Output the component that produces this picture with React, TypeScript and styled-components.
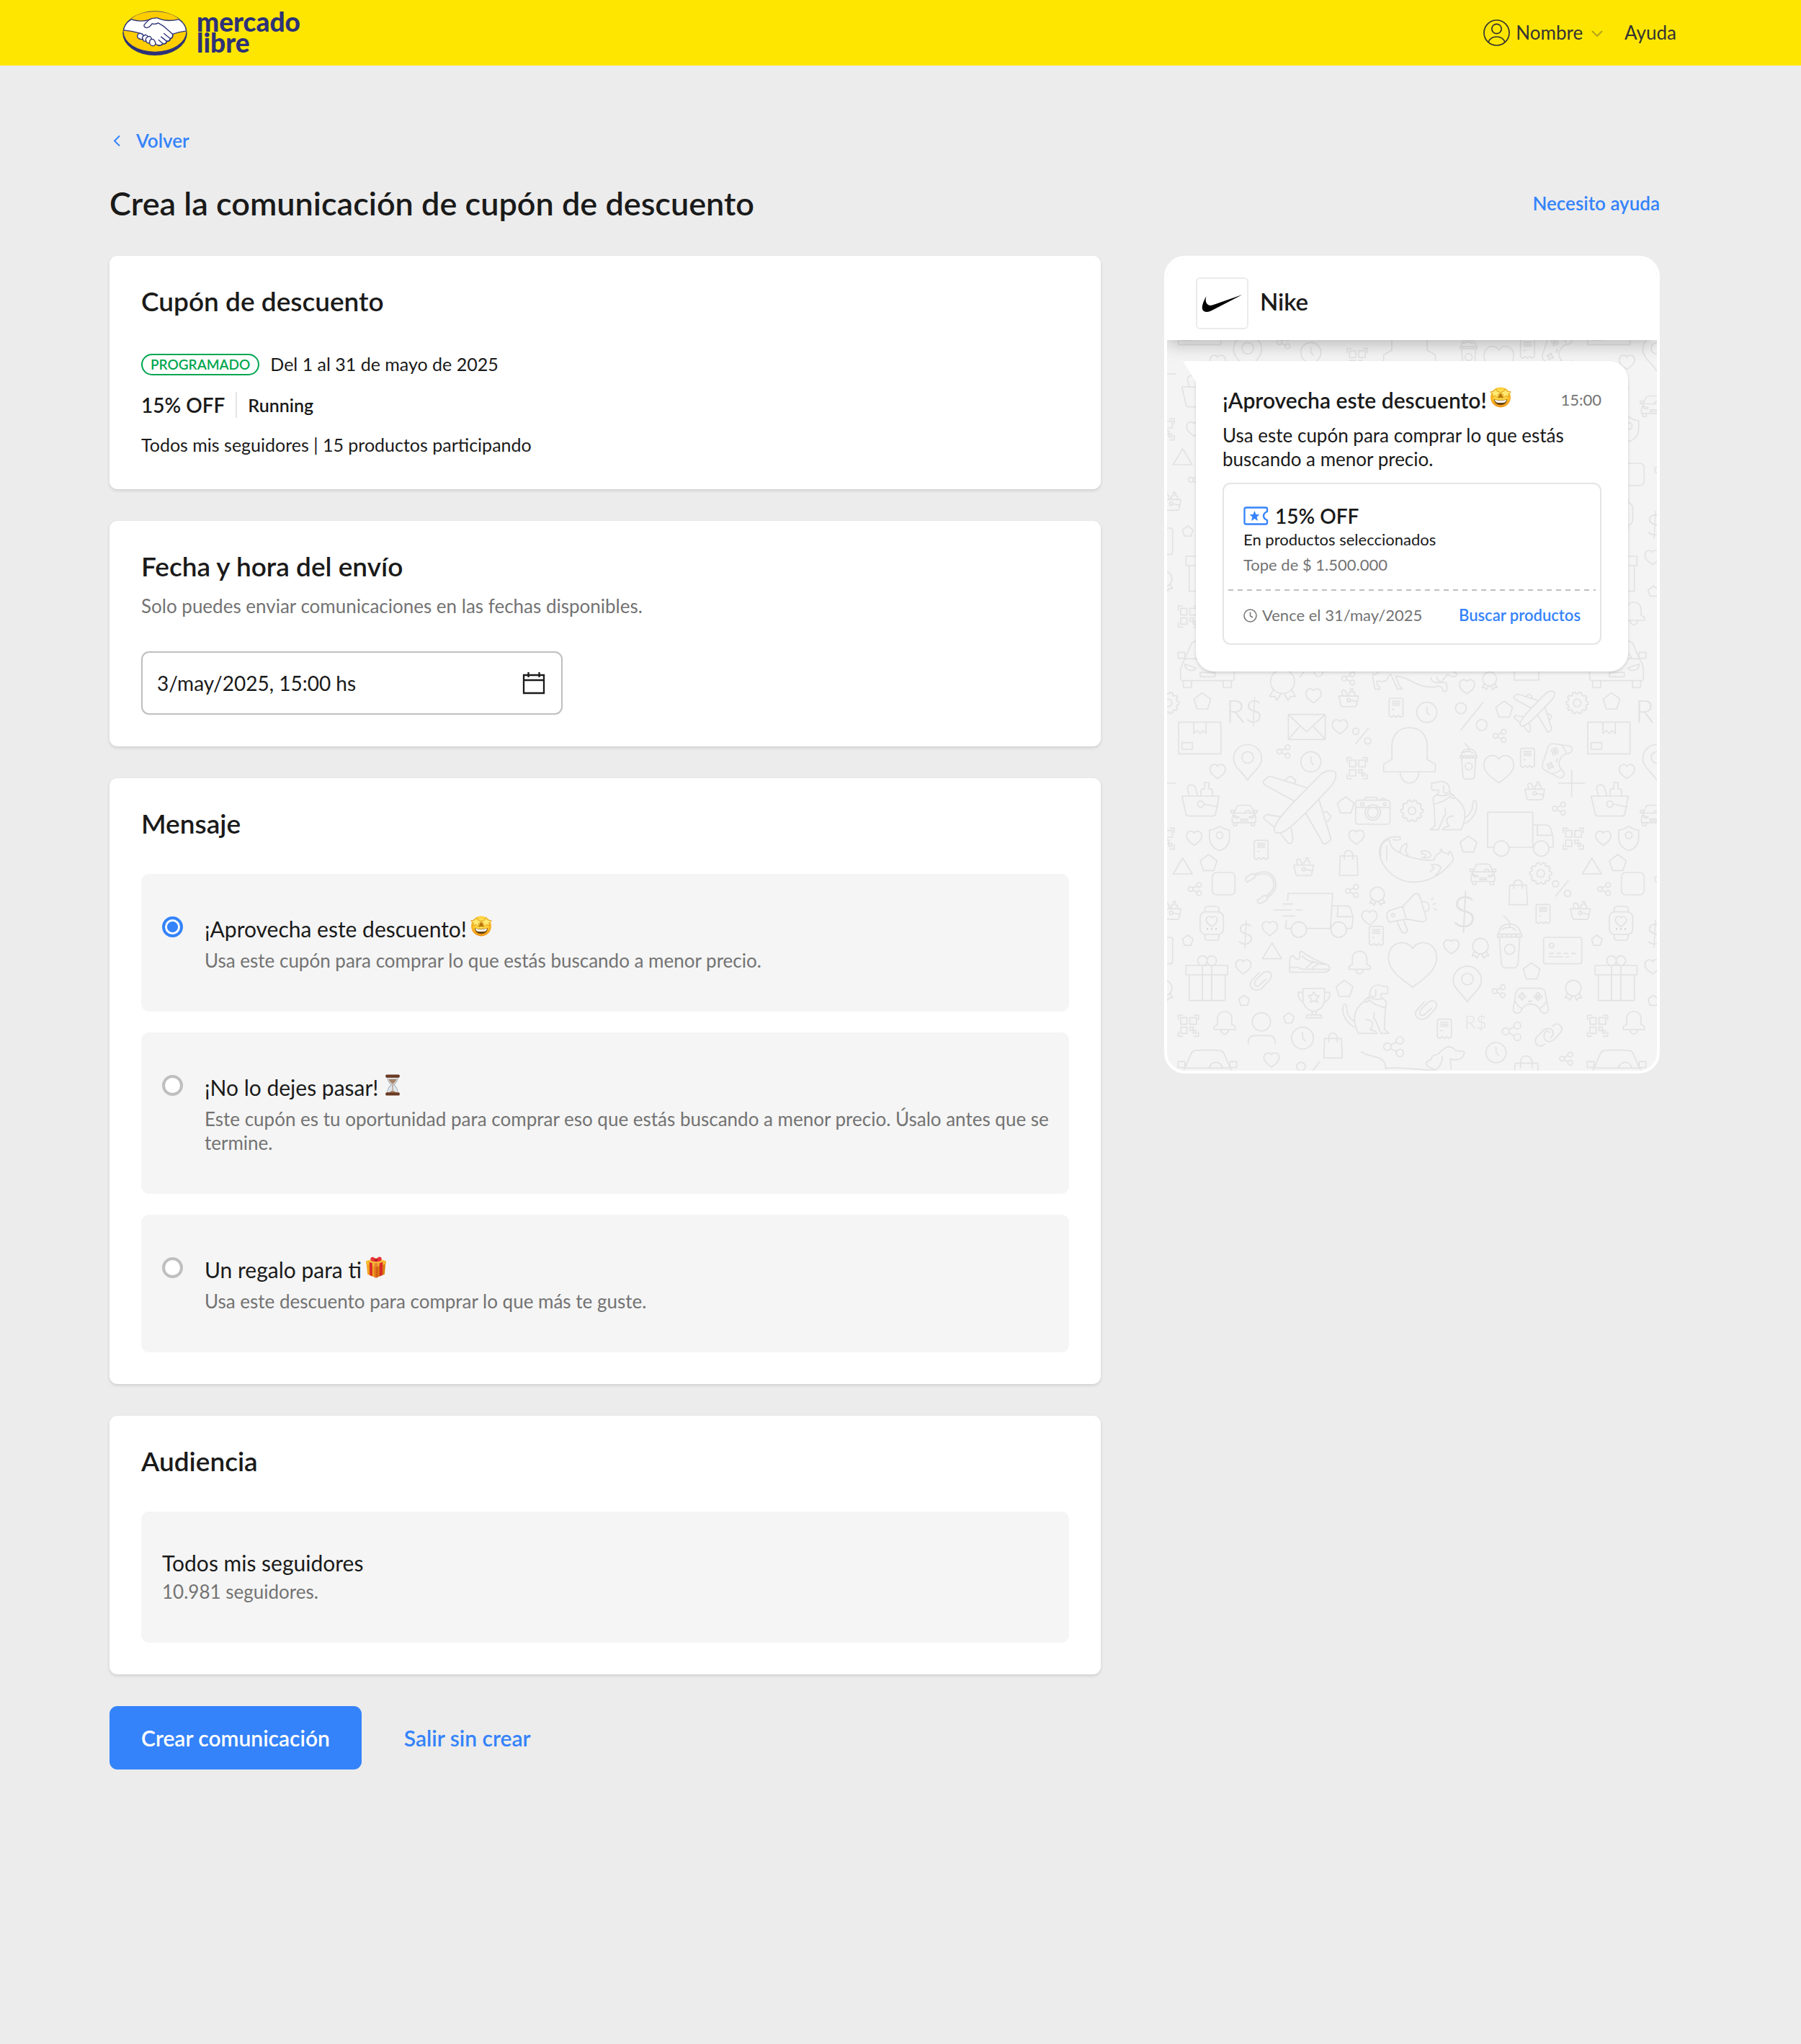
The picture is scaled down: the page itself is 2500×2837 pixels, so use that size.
import React, { useState } from 'react';
import styled, { createGlobalStyle } from 'styled-components';

const font = 'Lato, "Liberation Sans", sans-serif';
const blue = '#3483fa';
const ink = '#1a1a1a';
const muted = '#737373';

const GlobalStyle = createGlobalStyle`
  *, *::before, *::after { box-sizing: border-box; }
  html { min-height: 100%; background: #ececec; }
  body { margin: 0; font-family: ${font}; font-size: 26px; line-height: 33px; color: ${ink}; }
  button, input { font: inherit; color: inherit; }
  h1, h2, h3, p { margin: 0; }
  a { color: inherit; text-decoration: none; }
`;

/* ---------- layout ---------- */

const TopBar = styled.header`
  display: flex;
  align-items: center;
  justify-content: space-between;
  height: 91px;
  padding: 0 173px 0 170px;
  background: #ffe600;
`;

const Brand = styled.a`
  display: flex;
  align-items: center;
  gap: 13px;
  color: #2d3277;
`;

const Wordmark = styled.span`
  width: min-content;
  font-size: 37px;
  font-weight: 900;
  line-height: 29px;
  padding-bottom: 4px;
`;

const Nav = styled.nav`
  display: flex;
  align-items: center;
  gap: 23px;
  color: #333;
`;

const UserButton = styled.button`
  display: flex;
  align-items: center;
  gap: 8px;
  padding: 0;
  border: 0;
  background: none;
  cursor: pointer;
`;

const Page = styled.main`
  padding: 88px 196px 160px 152px;
`;

const BackLink = styled.a`
  display: flex;
  align-items: center;
  gap: 21px;
  width: fit-content;
  padding-left: 5px;
  height: 32px;
  font-weight: 600;
  color: ${blue};
`;

const TitleRow = styled.div`
  display: flex;
  align-items: center;
  justify-content: space-between;
  margin: 44px 0 46px;
`;

const PageTitle = styled.h1`
  font-size: 45px;
  line-height: 54px;
  font-weight: 600;
`;

const TextLink = styled.a<{ $small?: boolean }>`
  font-size: ${(p) => (p.$small ? 22 : 26)}px;
  line-height: 30px;
  font-weight: 600;
  color: ${blue};
`;

const Columns = styled.div`
  display: grid;
  grid-template-columns: minmax(0, 2fr) minmax(0, 1fr);
  gap: 88px;
  align-items: start;
`;

const Stack = styled.form`
  display: flex;
  flex-direction: column;
  gap: 44px;
`;

const Card = styled.section`
  padding: 44px;
  border-radius: 11px;
  background: #fff;
  box-shadow: 0 2px 4px rgba(0, 0, 0, 0.13);
`;

const CardTitle = styled.h2`
  font-size: 37px;
  line-height: 38px;
  font-weight: 600;
`;

const Facts = styled.div`
  display: flex;
  flex-direction: column;
  gap: 21px;
  margin-top: 51px;
  font-size: 25px;
`;

const FactRow = styled.div`
  display: flex;
  align-items: center;
  gap: 15px;
  height: 35px;
`;

const Badge = styled.span`
  display: inline-flex;
  align-items: center;
  height: 30px;
  padding: 0 11px;
  border: 2px solid #00a650;
  border-radius: 15px;
  font-size: 19px;
  line-height: 24px;
  font-weight: 600;
  color: #00a650;
`;

const Discount = styled.strong`
  font-size: 28px;
  line-height: 36px;
  font-weight: 600;
`;

const Category = styled.strong`
  padding-left: 15px;
  border-left: 2px solid #e5e5e5;
  font-weight: 600;
  line-height: 36px;
`;

const Hint = styled.p`
  margin-top: 20px;
  color: ${muted};
`;

const DateField = styled.label`
  display: flex;
  align-items: center;
  justify-content: space-between;
  width: 585px;
  max-width: 100%;
  height: 88px;
  margin-top: 46px;
  padding: 0 22px 0 20px;
  border: 2px solid #bfbfbf;
  border-radius: 11px;
`;

const DateInput = styled.input`
  flex: 1;
  min-width: 0;
  padding: 0;
  border: 0;
  outline: 0;
  background: none;
  font-size: 28px;
`;

const OptionList = styled.div`
  display: flex;
  flex-direction: column;
  gap: 29px;
  margin-top: 51px;
`;

const Option = styled.label`
  display: flex;
  align-items: flex-start;
  gap: 30px;
  padding: 56px 16px 54px 29px;
  border-radius: 11px;
  background: #f5f5f5;
  cursor: pointer;
`;

const Radio = styled.input`
  appearance: none;
  flex: none;
  width: 29px;
  height: 29px;
  margin: 3px 0 0;
  border: 4px solid #bfbfbf;
  border-radius: 50%;
  background: #fff;
  &:checked {
    border-color: ${blue};
    background: radial-gradient(circle, ${blue} 7px, #fff 8px);
  }
`;

const OptionText = styled.span`
  display: flex;
  flex-direction: column;
  gap: 8px;
`;

const OptionTitle = styled.span`
  font-size: 30px;
  line-height: 40px;
`;

const OptionBody = styled.span`
  color: ${muted};
`;

const AudienceBox = styled.div`
  display: flex;
  flex-direction: column;
  gap: 4px;
  margin-top: 51px;
  padding: 51px 29px 54px;
  border-radius: 11px;
  background: #f5f5f5;
`;

const Actions = styled.div`
  display: flex;
  gap: 15px;
`;

const ActionButton = styled.button<{ $primary?: boolean }>`
  height: 88px;
  padding: 0 44px;
  border: 0;
  border-radius: 11px;
  background: ${(p) => (p.$primary ? blue : 'transparent')};
  color: ${(p) => (p.$primary ? '#fff' : blue)};
  font-size: 30px;
  font-weight: 600;
  cursor: pointer;
`;

/* ---------- message preview ---------- */

const Preview = styled.aside`
  border: 4px solid #fff;
  border-radius: 29px;
  background: #f4f4f4;
  overflow: hidden;
`;

const PreviewHead = styled.div`
  position: relative;
  z-index: 1;
  display: flex;
  align-items: center;
  gap: 16px;
  padding: 26px 40px 15px;
  background: #fff;
  box-shadow: 0 4px 24px rgba(0, 0, 0, 0.28);
`;

const SellerLogo = styled.div`
  display: grid;
  place-items: center;
  width: 73px;
  height: 72px;
  border: 2px solid #ebebeb;
  border-radius: 6px;
`;

const SellerName = styled.h2`
  padding-bottom: 6px;
  font-size: 33px;
  line-height: 38px;
  font-weight: 600;
`;

const Chat = styled.div`
  position: relative;
  min-height: 1014px;
  padding: 29px 40px;
`;

const Wallpaper = styled.svg`
  position: absolute;
  inset: 0;
  width: 100%;
  height: 100%;
`;

const Bubble = styled.div`
  position: relative;
  padding: 36px 37px 37px;
  border-radius: 0 26px 26px 26px;
  background: #fff;
  box-shadow: 0 2px 4px rgba(0, 0, 0, 0.15);
  &::before {
    content: '';
    position: absolute;
    top: 0;
    left: -18px;
    width: 19px;
    height: 31px;
    background: #fff;
    clip-path: polygon(0 0, 100% 0, 100% 100%);
  }
`;

const BubbleHead = styled.div`
  display: flex;
  justify-content: space-between;
  align-items: center;
`;

const BubbleTitle = styled.h3`
  font-size: 30px;
  line-height: 36px;
  font-weight: 600;
`;

const Small = styled.span<{ $muted?: boolean }>`
  font-size: 22px;
  line-height: 30px;
  color: ${(p) => (p.$muted ? muted : ink)};
`;

const BubbleBody = styled.p`
  margin: 15px 0 16px;
`;

const Coupon = styled.div`
  border: 2px solid #e5e5e5;
  border-radius: 11px;
`;

const CouponMain = styled.div`
  display: flex;
  flex-direction: column;
  gap: 5px;
  padding: 26px 27px 19px;
`;

const CouponTitle = styled.div`
  display: flex;
  align-items: center;
  gap: 9px;
  margin-bottom: -5px;
`;

const Perforation = styled.div`
  height: 2px;
  margin: 0 6px;
  background: repeating-linear-gradient(to right, #bfbfbf 0 7px, transparent 7px 13px);
`;

const CouponFoot = styled.div`
  display: flex;
  align-items: center;
  justify-content: space-between;
  padding: 19px 27px 24px;
`;

const Expiry = styled.span`
  display: flex;
  align-items: center;
  gap: 7px;
`;

const EmojiArt = styled.svg`
  width: 30px;
  height: 30px;
  margin-left: -3px;
  vertical-align: 0;
`;

/* ---------- icons ---------- */

const Handshake = () => (
  <svg width="90" height="62" viewBox="91 44 270 187" aria-hidden="true">
    <ellipse cx="226" cy="138" rx="135" ry="93" fill="#2d3277" />
    <ellipse cx="226" cy="131" rx="131" ry="84" fill="#ffcd00" />
    <g stroke="#2d3277" strokeWidth="4" strokeLinejoin="round" strokeLinecap="round">
      <path
        fill="#fff"
        d="M127 80 Q165 92 200 82 Q215 73 236 74 Q274 92 326 80 Q356 100 357 129 Q330 131 300 142 Q304 156 292 160 Q290 172 276 171 Q274 184 260 182 Q254 192 240 188 Q232 188 229 182 Q222 196 210 188 Q203 184 204 178 Q192 182 189 170 Q176 174 176 163 Q160 166 153 154 Q150 142 164 138 Q128 128 95 125 Q98 98 127 80Z"
      />
      <path fill="none" d="M165 139 Q175 138 178 149 Q190 140 197 152 Q210 148 212 162 Q226 162 229 182" />
      <path fill="none" d="M176 163 Q170 156 178 149 M189 170 Q184 160 197 152 M204 178 Q202 168 212 162" />
      <path
        fill="#fff"
        d="M212 77 Q200 80 181 103 Q178 113 192 115 Q206 112 214 98 Q228 102 240 95 Q262 106 280 124 Q292 134 300 142"
      />
      <path fill="none" d="M300 142 Q303 158 290 160 L264 139 M290 160 Q288 174 275 171 L252 153 M275 171 Q272 186 259 181 L242 166 M259 181 Q252 192 238 188" />
    </g>
  </svg>
);

const UserIcon = () => (
  <svg width="37" height="37" viewBox="0 0 37 37" fill="none" stroke="#333" strokeWidth="1.7" aria-hidden="true">
    <circle cx="18.500" cy="18.500" r="17.500" />
    <circle cx="18.500" cy="13" r="6.700" />
    <path d="M7 31.500 Q10 24 18.500 24 Q27 24 30 31.500" />
  </svg>
);

const ChevronDown = () => (
  <svg width="27" height="16" viewBox="0 0 27 16" fill="none" stroke="#b8a717" strokeWidth="2.200" aria-hidden="true">
    <path d="M5 5 L12 12 L19 5" />
  </svg>
);

const ChevronLeft = () => (
  <svg width="11" height="17" viewBox="0 0 11 17" fill="none" stroke={blue} strokeWidth="2" aria-hidden="true">
    <path d="M9 1.500 L2 8.500 L9 15.500" />
  </svg>
);

const CalendarIcon = () => (
  <svg width="32" height="32" viewBox="0 0 32 32" fill="none" stroke={ink} strokeWidth="2.300" aria-hidden="true">
    <path d="M2 5 H30 V30 H2Z M2 12 H30 M8.500 1 V8 M23.500 1 V8" />
  </svg>
);

const CouponIcon = () => (
  <svg width="35" height="26" viewBox="0 0 35 26" aria-hidden="true">
    <path
      d="M3.500 1.500 H31 Q33 1.500 33 3.500 V7 Q28 9 28 13 T33 19 V22.500 Q33 24.500 31 24.500 H3.500 Q1.500 24.500 1.500 22.500 V3.500 Q1.500 1.500 3.500 1.500Z"
      fill="none"
      stroke={blue}
      strokeWidth="2.300"
    />
    <path d="M15.500 6 L17.500 11 L22.500 11.300 L18.600 14.600 L20 20 L15.500 17 L11 20 L12.400 14.600 L8.500 11.300 L13.500 11Z" fill={blue} />
  </svg>
);

const ClockIcon = () => (
  <svg width="19" height="19" viewBox="0 0 19 19" fill="none" stroke={muted} strokeWidth="1.500" aria-hidden="true">
    <circle cx="9.500" cy="9.500" r="8.500" />
    <path d="M9.500 4.500 V9.800 L13 12" />
  </svg>
);

const Swoosh = () => (
  <svg width="57" height="25" viewBox="0 0 57 25" aria-hidden="true">
    <path d="M56.500 0 L14 22 Q6 26 2 22 Q-2 17 6.500 2 Q4 11 9 14 Q12 16 18 13.500Z" fill="#000" />
  </svg>
);

const StarStruck = () => (
  <EmojiArt viewBox="0 1 56 56" role="img" aria-label="Cara con estrellas">
    <defs>
      <radialGradient id="face" cx="0.5" cy="0.35" r="0.65">
        <stop offset="0" stopColor="#fff36b" />
        <stop offset="0.65" stopColor="#fdc52b" />
        <stop offset="1" stopColor="#ee8f12" />
      </radialGradient>
    </defs>
    <circle cx="28" cy="28" r="26" fill="url(#face)" />
    <path d="M11 33 Q28 38 45 33 Q43 48 28 48 Q13 48 11 33Z" fill="#6b4312" />
    <path d="M13 34 Q28 39 43 34 Q42 40 39 41 Q28 43 17 41 Q14 40 13 34Z" fill="#fff" />
    <path d="M22 31 Q24 18 28 18 Q32 18 34 31 Q28 27 22 31Z" fill="#b8740c" />
    <g fill="#ffe96e" stroke="#d98f14" strokeWidth="1.500" strokeLinejoin="round">
      <path d="M16 5 L19 12 L28 15 L22 20 L21 29 L14 24 L6 27 L8 20 L1 14 L11 12Z" />
      <path d="M40 5 L45 12 L55 14 L48 20 L50 27 L42 24 L35 29 L34 20 L28 15 L37 12Z" />
    </g>
  </EmojiArt>
);

const Hourglass = () => (
  <EmojiArt viewBox="0 0 58 58" role="img" aria-label="Reloj de arena">
    <path d="M15 8 H43 Q43 20 32 28 Q43 36 43 50 H15 Q15 36 26 28 Q15 20 15 8Z" fill="#dfe6ec" stroke="#a9b1b8" strokeWidth="2" />
    <path d="M18 13 H40 Q38 20 29 26 Q20 20 18 13Z" fill="#a98468" />
    <path d="M19 50 Q29 38 39 50Z" fill="#a98468" />
    <path d="M29 26 V44" stroke="#a98468" strokeWidth="2" />
    <rect x="10" y="1" width="38" height="8" rx="3" fill="#6b3a22" />
    <rect x="10" y="49" width="38" height="8" rx="3" fill="#6b3a22" />
  </EmojiArt>
);

const GiftEmoji = () => (
  <EmojiArt viewBox="0 0 58 58" role="img" aria-label="Regalo">
    <path d="M3 13 L29 20 V57 L6 48Z" fill="#f2a31f" />
    <path d="M55 13 L29 20 V57 L52 48Z" fill="#d9820f" />
    <path d="M2 12 L29 4 L56 12 V20 L29 28 L2 20Z" fill="#f8bb35" />
    <path d="M11 15 L19 18 V53 L12 50Z M47 15 L38 18 V53 L46 50Z" fill="#d92b2b" />
    <path d="M24 18 H34 V56 L29 58 L24 56Z" fill="#c81f27" opacity="0.35" />
    <path d="M29 13 Q16 16 14 7 Q15 0 22 2 Q28 4 29 9 Q31 3 37 1 Q44 0 44 7 Q42 16 29 13Z" fill="#e8313b" />
    <circle cx="29" cy="10" r="4" fill="#b81c24" />
  </EmojiArt>
);

/* ---------- wallpaper motifs ---------- */

const gearPath = (r: number, teeth: number) => {
  const points: string[] = [];
  for (let i = 0; i < teeth; i += 1) {
    [-0.3, -0.2, 0.2, 0.3].forEach((offset, k) => {
      const angle = ((i + offset) / teeth) * Math.PI * 2;
      const radius = k === 0 || k === 3 ? r * 0.84 : r;
      points.push(`${(Math.cos(angle) * radius).toFixed(1)} ${(Math.sin(angle) * radius).toFixed(1)}`);
    });
  }
  return `M${points.join('L')}Z`;
};

const circle = (cx: number, cy: number, r: number) =>
  `M${cx - r} ${cy}a${r} ${r} 0 1 0 ${r * 2} 0a${r} ${r} 0 1 0 ${-r * 2} 0`;

const shapes = {
  heart: 'M32 59C14 46 0 36 0 20C0 8 8 0 18 0C25 0 30 4 32 8C34 4 39 0 46 0C56 0 64 8 64 20C64 36 50 46 32 59Z',
  pentagon: 'M35 0L70 26L57 67H13L0 26Z',
  triangle: 'M40 0L80 66H0Z',
  share: `${circle(10, 27, 10)}${circle(44, 10, 10)}${circle(44, 44, 10)}M19 22L35 14M19 32L35 40`,
  clock: `${circle(43, 43, 42)}M43 20V43L55 56`,
  gear: `${gearPath(46, 10)}${circle(0, 0, 16)}`,
  percent: `${circle(13, 15, 13)}${circle(63, 55, 13)}M12 68L67 0`,
  basket: `M0 57H155L140 132Q138 140 128 140H29Q19 140 17 132ZM79 57V36Q79 26 95 26V0H112V26Q127 26 127 36V57M31 57L23 27Q22 10 39 10Q52 10 56 22L66 57${circle(78, 90, 13)}M91 90L152 102`,
  receipt: 'M0 8Q0 0 8 0H50Q58 0 58 8V74L48 80L39 72L29 80L20 72L10 80L0 74ZM12 13H46M12 21H46M12 29H46M12 47H22',
  qr: 'M0 20V0H20M64 0H84V20M84 68V88H64M20 88H0V68M10 10H36V38H10ZM48 10H76V38H48ZM10 50H36V76H10ZM48 50H62V64H48ZM62 64H74V76H62Z',
  medal: `${circle(54, 50, 50)}M16 84L0 112H21L31 128L47 101M92 84L108 112H87L77 128L61 101`,
  bell: 'M0 75V62L14 54V32C14 12 26 0 44 0S74 12 74 32V54L88 62V75ZM28 75A16 19 0 0 0 60 75',
  pin: `M58 148C45 120 0 95 0 58A58 58 0 0 1 117 58C117 95 72 120 58 148Z${circle(59, 53, 24)}`,
  bag: 'M3 22H73L77 103H0ZM20 38V20Q20 0 37 0T56 20V38',
  plane:
    'M48 250C40 230 70 190 132 125L240 15C260 -2 285 -5 300 5C310 20 300 40 285 62L180 172C120 230 85 265 55 258Q48 256 48 250ZM132 127L6 58Q-5 48 5 38L20 25Q25 22 35 24L188 72M232 118L282 280Q284 286 278 290L262 303Q254 307 248 298L176 174M72 191L20 182Q5 184 2 196Q8 206 48 234M114 231Q128 275 122 294Q112 310 102 298L70 258M92 39L106 26Q115 20 120 25L137 41L128 54M251 174L264 169L282 188Q284 194 278 199L266 213',
  car: 'M12 116Q18 91 28 74L56 11Q61 2 74 1Q123 -3 172 1Q184 2 190 11L216 73Q230 91 234 116V153Q234 165 222 165H22Q10 165 10 153V116M28 74H216M130 73A28 28 0 0 1 185 73M0 47H28V72H0ZM216 47H244V72H216ZM28 96L76 113Q66 123 56 123Q28 121 28 96ZM216 96L168 113Q178 123 188 123Q216 121 216 96ZM92 131H154V149H92ZM22 165V190Q22 194 26 194H52Q56 194 56 190V165M188 165V190Q188 194 192 194H218Q222 194 222 190V165',
  cup: `M5 79Q8 36 51 36Q92 38 97 79M0 79H101V91H0ZM14 85H22M34 85H42M54 85H62M74 85H82M8 91L16 200Q18 219 36 219H66Q84 219 86 200L93 91${circle(51, 142, 21)}M25 2L50 27V50M17 62Q25 50 45 52Q60 44 70 60L80 62`,
  gamepad: `M34 0H112Q128 0 134 18L146 82Q150 100 132 104Q120 106 112 90Q100 66 73 66Q46 66 36 90Q28 106 14 104Q-2 100 1 82L12 18Q18 0 34 0ZM8 52Q14 70 36 84M139 52Q134 70 112 84M34 20H42V30H52V38H42V48H34V38H24V30H34Z${circle(104, 24, 6)}${circle(104, 44, 6)}${circle(94, 34, 6)}${circle(114, 34, 6)}M62 58L67 52L72 57L79 51`,
  dog: 'M12 38Q4 36 6 23V8H19L42 2Q69 0 78 23L84 53L99 63M56 18V46Q66 60 78 43M12 38H34Q37 48 32 53L12 70Q12 88 16 103L20 186L0 203H34L59 143M24 56Q54 68 86 53Q104 60 100 72Q90 76 84 63Q59 88 14 96M99 66Q144 98 144 138Q146 168 128 203H50Q59 190 79 188Q50 148 99 145M64 111Q59 128 66 138L56 150M144 178Q194 148 193 98Q192 78 180 83Q176 98 174 118Q164 143 144 153',
  clip: 'M38 2L8 34Q-9 54 8 71Q28 84 48 69L81 34Q95 14 81 2Q63 -6 48 9L23 34Q11 52 23 59Q33 64 43 52L68 29',
};

type ShapeName = keyof typeof shapes;
type Placed = [ShapeName, number, number, number?];

const topLeft: Placed[] = [
  ['car', 106, -31], ['medal', 487, 88], ['heart', 638, 168], ['share', 788, 98], ['basket', 775, 168, 0.53],
  ['receipt', 985, 207], ['pentagon', 172, 185], ['heart', 748, 297], ['percent', 833, 330], ['bell', 962, 330, 2.45],
  ['share', 518, 402], ['clock', 616, 429], ['pin', 337, 401], ['heart', 239, 483], ['qr', 810, 455],
  ['plane', 460, 510], ['basket', 122, 558], ['car', 327, 653, 0.44], ['heart', 141, 761], ['receipt', 423, 799],
  ['pentagon', 769, 618], ['heart', 817, 757], ['pentagon', 198, 858],
];

const topRight: Placed[] = [
  ['medal', 322, 98, 0.58], ['heart', 227, 130], ['bag', 455, -7, 1.35], ['clock', 49, 223], ['percent', 211, 223, 1.74],
  ['pentagon', 379, 219], ['plane', 454, 178, 0.56], ['gear', 718, 227], ['share', 368, 337], ['cup', 231, 393, 0.69],
  ['heart', 330, 446, 1.93], ['receipt', 482, 416], ['basket', 500, 556, 0.53], ['share', 615, 640], ['gear', 30, 676],
  ['dog', 106, 552], ['pentagon', 230, 781], ['qr', 660, 748],
];

const bottomLeft: Placed[] = [
  ['triangle', 85, 3], ['basket', 588, 2, 0.53], ['bag', 778, -28], ['share', 149, 105], ['share', 803, 113],
  ['medal', 904, 124, 0.59], ['heart', 871, 222], ['heart', 456, 267], ['heart', 223, 246, 0.72], ['receipt', 902, 287],
  ['triangle', 457, 356], ['bell', 818, 391], ['heart', 982, 355, 3.14], ['heart', 346, 426], ['pentagon', 124, 324, 0.63],
  ['clip', 407, 476], ['pentagon', 359, 574, 0.63], ['qr', 107, 657], ['bell', 256, 642], ['pentagon', 764, 512],
  ['pentagon', 545, 647, 0.63], ['clock', 578, 706, 1.08], ['bag', 713, 732], ['share', 962, 747, 1.54], ['heart', 463, 814],
];

const bottomRight: Placed[] = [
  ['car', 272, 28, 0.44], ['gear', 566, 67], ['bag', 434, 94], ['percent', 615, 95], ['receipt', 547, 196],
  ['basket', 690, 184, 0.53], ['heart', 162, 343], ['medal', 280, 337, 0.65], ['cup', 386, 241], ['pentagon', 493, 439],
  ['pin', 202, 454], ['share', 364, 530], ['gamepad', 451, 545], ['medal', 667, 512, 0.65], ['clip', 45, 598],
  ['receipt', 136, 674], ['share', 406, 686, 1.42], ['clock', 337, 770], ['share', 645, 811],
];

const Motifs = ({ items }: { items: Placed[] }) => (
  <>
    {items.map(([name, x, y, scale = 1]) => (
      <path key={`${name}${x}-${y}`} d={shapes[name]} transform={`translate(${x} ${y}) scale(${scale})`} strokeWidth={5 / scale} />
    ))}
  </>
);

const TILE = 568;

const MotifTile = () => (
  <g fill="none" stroke="#e2e2e2" strokeWidth="5" strokeLinejoin="round" fontFamily="Lato, sans-serif" fontWeight="300">
    <g transform="translate(-20 -20) scale(0.3333)">
      <Motifs items={topLeft} />
      <path d={`${circle(618, 37, 18)}${circle(691, 99, 18)}M697 16L612 120`} />
      <text x="306" y="308" fontSize="128" fill="#e2e2e2" stroke="none">R$</text>
      <path d="M565 275H719V379H565ZM565 275L641 347L719 275M565 379L612 325M719 379L670 325" />
      <path d="M108 307H284V439H108ZM171 307V354L185 342L198 354L210 342L223 354V307M122 392H166V420H122Z" />
      <path d={`M279 740Q300 755 320 756V790Q318 830 279 842Q240 830 237 790V756Q258 755 279 740Z${circle(279, 778, 14)}`} />
      <rect x="845" y="632" width="144" height="100" rx="12" />
      <path d={`M845 662H989${circle(917, 683, 32)}${circle(917, 683, 22)}${circle(967, 648, 6)}M882 632L888 620H932L938 632M950 632Q952 622 960 624T968 632M868 643H878Q883 649 878 655H868Q863 649 868 643Z`} />
      <path d="M868 -26C890 -8 915 -8 940 0C965 10 972 30 970 46C1000 38 1040 44 1080 46L1190 55M1175 50C1160 45 1140 38 1138 22Q1150 10 1160 8Q1162 -10 1178 -12Q1190 -12 1196 -22Q1220 -46 1235 -46Q1255 -40 1262 -30L1292 -26Q1300 -26 1297 -15Q1290 8 1265 8Q1250 10 1240 5L1243 50M1206 -8Q1208 15 1198 30Q1185 50 1175 50M937 96Q940 110 920 108Q914 115 918 130L927 170H946Q948 158 936 154L934 136Q965 140 975 132Q985 108 992 108L1020 170H1038Q1038 162 1028 156L1012 115Q1040 116 1080 137C1110 155 1140 164 1175 160L1192 156Q1206 158 1210 178Q1225 182 1227 168L1224 150Q1226 140 1215 142L1180 142Q1160 140 1158 120M1182 118Q1190 140 1202 140L1228 108L1240 115Q1258 122 1265 112Q1268 100 1250 96" />
      <path d="M1030 785Q960 778 945 835C935 880 990 973 1090 973C1160 972 1215 930 1252 882Q1250 850 1235 845L1232 860Q1218 848 1210 850L1202 835L1196 852Q1176 858 1172 880C1150 888 1090 876 1050 862L1025 848Q985 830 988 796M1030 785Q1036 798 1020 798L1000 796M950 868Q945 800 985 796M975 885V820M1030 848Q1030 825 1058 810Q1062 830 1052 840L1066 868M1118 870Q1155 878 1160 860Q1145 836 1120 844Q1112 856 1135 858Q1142 865 1128 872M1160 900Q1190 895 1200 912Q1195 935 1175 946M1154 932L1172 916L1160 900" />
    </g>
    <g transform="translate(330 -20) scale(0.3333)">
      <Motifs items={topRight} />
      <path d="M638 561H751M695 505V618" />
      <path d={shapes.gamepad} transform="translate(632 462) rotate(-72) scale(0.95) translate(-73 -52)" />
      <path d={`M370 828H345V682H533V828H434M533 735H585Q605 735 610 755L618 790V828H600M533 828H537M552 735V778H612${circle(402, 833, 32)}${circle(568, 833, 32)}`} />
    </g>
    <g transform="translate(-20 270) scale(0.3333)">
      <Motifs items={bottomLeft} />
      <rect x="248" y="63" width="95" height="93" rx="18" />
      <rect x="198" y="227" width="97" height="94" rx="22" />
      <path d="M218 227V215Q218 204 230 204H264Q276 204 276 215V227M218 321V333Q218 345 230 345H264Q276 345 276 333V321" />
      <path d="M226 298H230M244 298H248M262 298H266" stroke="#b5b5b5" />
      <path d="M425 68Q500 40 514 110Q512 150 478 165M425 76Q492 50 506 110Q504 145 470 161M388 84L415 67L428 75L425 85L395 103Q385 100 388 84ZM436 180L465 158L480 165L475 178L450 192Q436 192 436 180Z" />
      <text x="350" y="364" fontSize="124" fill="#e2e2e2" stroke="none">$</text>
      <path d={`M562 182L564 150H750L740 296H642M576 296H554L557 262M748 202H805Q825 202 828 225L835 250L829 296H806M772 202L769 247H835${circle(609, 301, 32)}${circle(775, 301, 32)}M542 194H585M503 219H580M595 219H625M542 244H593`} />
      <path d={`M1042 204L1085 158Q1097 145 1112 158L1140 255Q1138 270 1120 268L1056 257L985 270Q965 240 985 222ZM1042 204L1056 257${circle(1002, 241, 7)}M1018 268L1037 310Q1050 322 1062 305L1045 262M1122 185Q1150 180 1152 210Q1150 225 1135 225M1160 178L1168 168M1165 195L1181 192M1170 213L1184 220`} />
      <path d={`M139 450H313V489H139ZM152 489V596H302V489M207 450V596M246 450V596${circle(207, 430, 20)}${circle(246, 430, 20)}`} />
      <path d="M569 470L572 418Q575 408 588 410Q592 424 605 424Q618 422 612 402Q612 390 622 392L640 405Q690 435 730 448Q742 460 735 470Q728 478 715 478H575Q568 478 569 470ZM569 458H605Q615 466 630 466H735M622 410Q650 440 690 438M638 462L672 432M662 464L690 442L715 446" />
      <path d={`${circle(453, 685, 38)}M398 778Q396 742 425 742H484Q512 742 511 778`} />
      <path d="M626 546H716V590Q715 630 671 642Q627 630 626 590ZM626 562H605Q605 595 628 604M716 562H739Q738 595 714 604M664 643V656M680 643V656M640 668V662Q640 656 648 656H696Q704 656 704 662V668ZM671 560L678 574L694 576L683 588L686 604L671 596L657 604L660 588L648 576L664 574Z" />
      <path d={shapes.dog} transform="translate(985 530) scale(-1 1)" />
    </g>
    <g transform="translate(330 270) scale(0.3333)">
      <Motifs items={bottomRight} />
      <text x="195" y="292" fontSize="182" fill="#e2e2e2" stroke="none">$</text>
      <text x="249" y="714" fontSize="78" fill="#e2e2e2" stroke="none">R$</text>
      <rect x="578" y="333" width="159" height="110" rx="8" />
      <path d="M607 358H616Q625 367 616 376H607Q598 367 607 358ZM600 400H620M631 400H651M662 400H682M693 400H713M600 414H661M670 414H684" />
      <path d="M613 704Q630 688 645 697Q662 712 648 730L620 760Q600 775 585 760Q572 740 590 722L605 730M585 776Q568 792 552 782Q538 768 548 750L580 718Q600 705 615 720Q625 740 605 752" />
    </g>
  </g>
);

const offsets = [-TILE, 0, TILE];

const ChatWallpaper = () => (
  <Wallpaper aria-hidden="true">
    <defs>
      <g id="motif-tile"><MotifTile /></g>
      <pattern id="motifs" width={TILE} height={TILE} y={-120} patternUnits="userSpaceOnUse">
        {offsets.map((x) => offsets.map((y) => <use key={`${x},${y}`} href="#motif-tile" x={x} y={y} />))}
      </pattern>
    </defs>
    <rect width="100%" height="100%" fill="url(#motifs)" />
  </Wallpaper>
);

/* ---------- page ---------- */

const messages = [
  {
    title: '¡Aprovecha este descuento!',
    body: 'Usa este cupón para comprar lo que estás buscando a menor precio.',
    Emoji: StarStruck,
  },
  {
    title: '¡No lo dejes pasar!',
    body: 'Este cupón es tu oportunidad para comprar eso que estás buscando a menor precio. Úsalo antes que se termine.',
    Emoji: Hourglass,
  },
  { title: 'Un regalo para ti', body: 'Usa este descuento para comprar lo que más te guste.', Emoji: GiftEmoji },
];

export default function App() {
  const [selected, setSelected] = useState(0);
  const [date, setDate] = useState('3/may/2025, 15:00 hs');
  const current = messages[selected];

  return (
    <>
      <GlobalStyle />
      <TopBar>
        <Brand href="#">
          <Handshake />
          <Wordmark>mercado libre</Wordmark>
        </Brand>
        <Nav>
          <UserButton type="button">
            <UserIcon />
            Nombre
            <ChevronDown />
          </UserButton>
          <a href="#">Ayuda</a>
        </Nav>
      </TopBar>
      <Page>
        <BackLink href="#"><ChevronLeft />Volver</BackLink>
        <TitleRow>
          <PageTitle>Crea la comunicación de cupón de descuento</PageTitle>
          <TextLink href="#">Necesito ayuda</TextLink>
        </TitleRow>
        <Columns>
          <Stack onSubmit={(e) => e.preventDefault()}>
            <Card>
              <CardTitle>Cupón de descuento</CardTitle>
              <Facts>
                <FactRow><Badge>PROGRAMADO</Badge>Del 1 al 31 de mayo de 2025</FactRow>
                <FactRow><Discount>15% OFF</Discount><Category>Running</Category></FactRow>
                <FactRow>Todos mis seguidores | 15 productos participando</FactRow>
              </Facts>
            </Card>
            <Card>
              <CardTitle>Fecha y hora del envío</CardTitle>
              <Hint>Solo puedes enviar comunicaciones en las fechas disponibles.</Hint>
              <DateField>
                <DateInput aria-label="Fecha y hora del envío" value={date} onChange={(e) => setDate(e.target.value)} />
                <CalendarIcon />
              </DateField>
            </Card>
            <Card>
              <CardTitle>Mensaje</CardTitle>
              <OptionList role="radiogroup" aria-label="Mensaje">
                {messages.map(({ title, body, Emoji }, i) => (
                  <Option key={title}>
                    <Radio type="radio" name="mensaje" checked={i === selected} onChange={() => setSelected(i)} />
                    <OptionText>
                      <OptionTitle>{title} <Emoji /></OptionTitle>
                      <OptionBody>{body}</OptionBody>
                    </OptionText>
                  </Option>
                ))}
              </OptionList>
            </Card>
            <Card>
              <CardTitle>Audiencia</CardTitle>
              <AudienceBox>
                <OptionTitle>Todos mis seguidores</OptionTitle>
                <OptionBody>10.981 seguidores.</OptionBody>
              </AudienceBox>
            </Card>
            <Actions>
              <ActionButton type="submit" $primary>Crear comunicación</ActionButton>
              <ActionButton type="button">Salir sin crear</ActionButton>
            </Actions>
          </Stack>
          <Preview>
            <PreviewHead>
              <SellerLogo><Swoosh /></SellerLogo>
              <SellerName>Nike</SellerName>
            </PreviewHead>
            <Chat>
              <ChatWallpaper />
              <Bubble>
                <BubbleHead>
                  <BubbleTitle>{current.title} <current.Emoji /></BubbleTitle>
                  <Small $muted>15:00</Small>
                </BubbleHead>
                <BubbleBody>{current.body}</BubbleBody>
                <Coupon>
                  <CouponMain>
                    <CouponTitle><CouponIcon /><Discount>15% OFF</Discount></CouponTitle>
                    <Small>En productos seleccionados</Small>
                    <Small $muted>Tope de $ 1.500.000</Small>
                  </CouponMain>
                  <Perforation />
                  <CouponFoot>
                    <Expiry><ClockIcon /><Small $muted>Vence el 31/may/2025</Small></Expiry>
                    <TextLink $small href="#">Buscar productos</TextLink>
                  </CouponFoot>
                </Coupon>
              </Bubble>
            </Chat>
          </Preview>
        </Columns>
      </Page>
    </>
  );
}
